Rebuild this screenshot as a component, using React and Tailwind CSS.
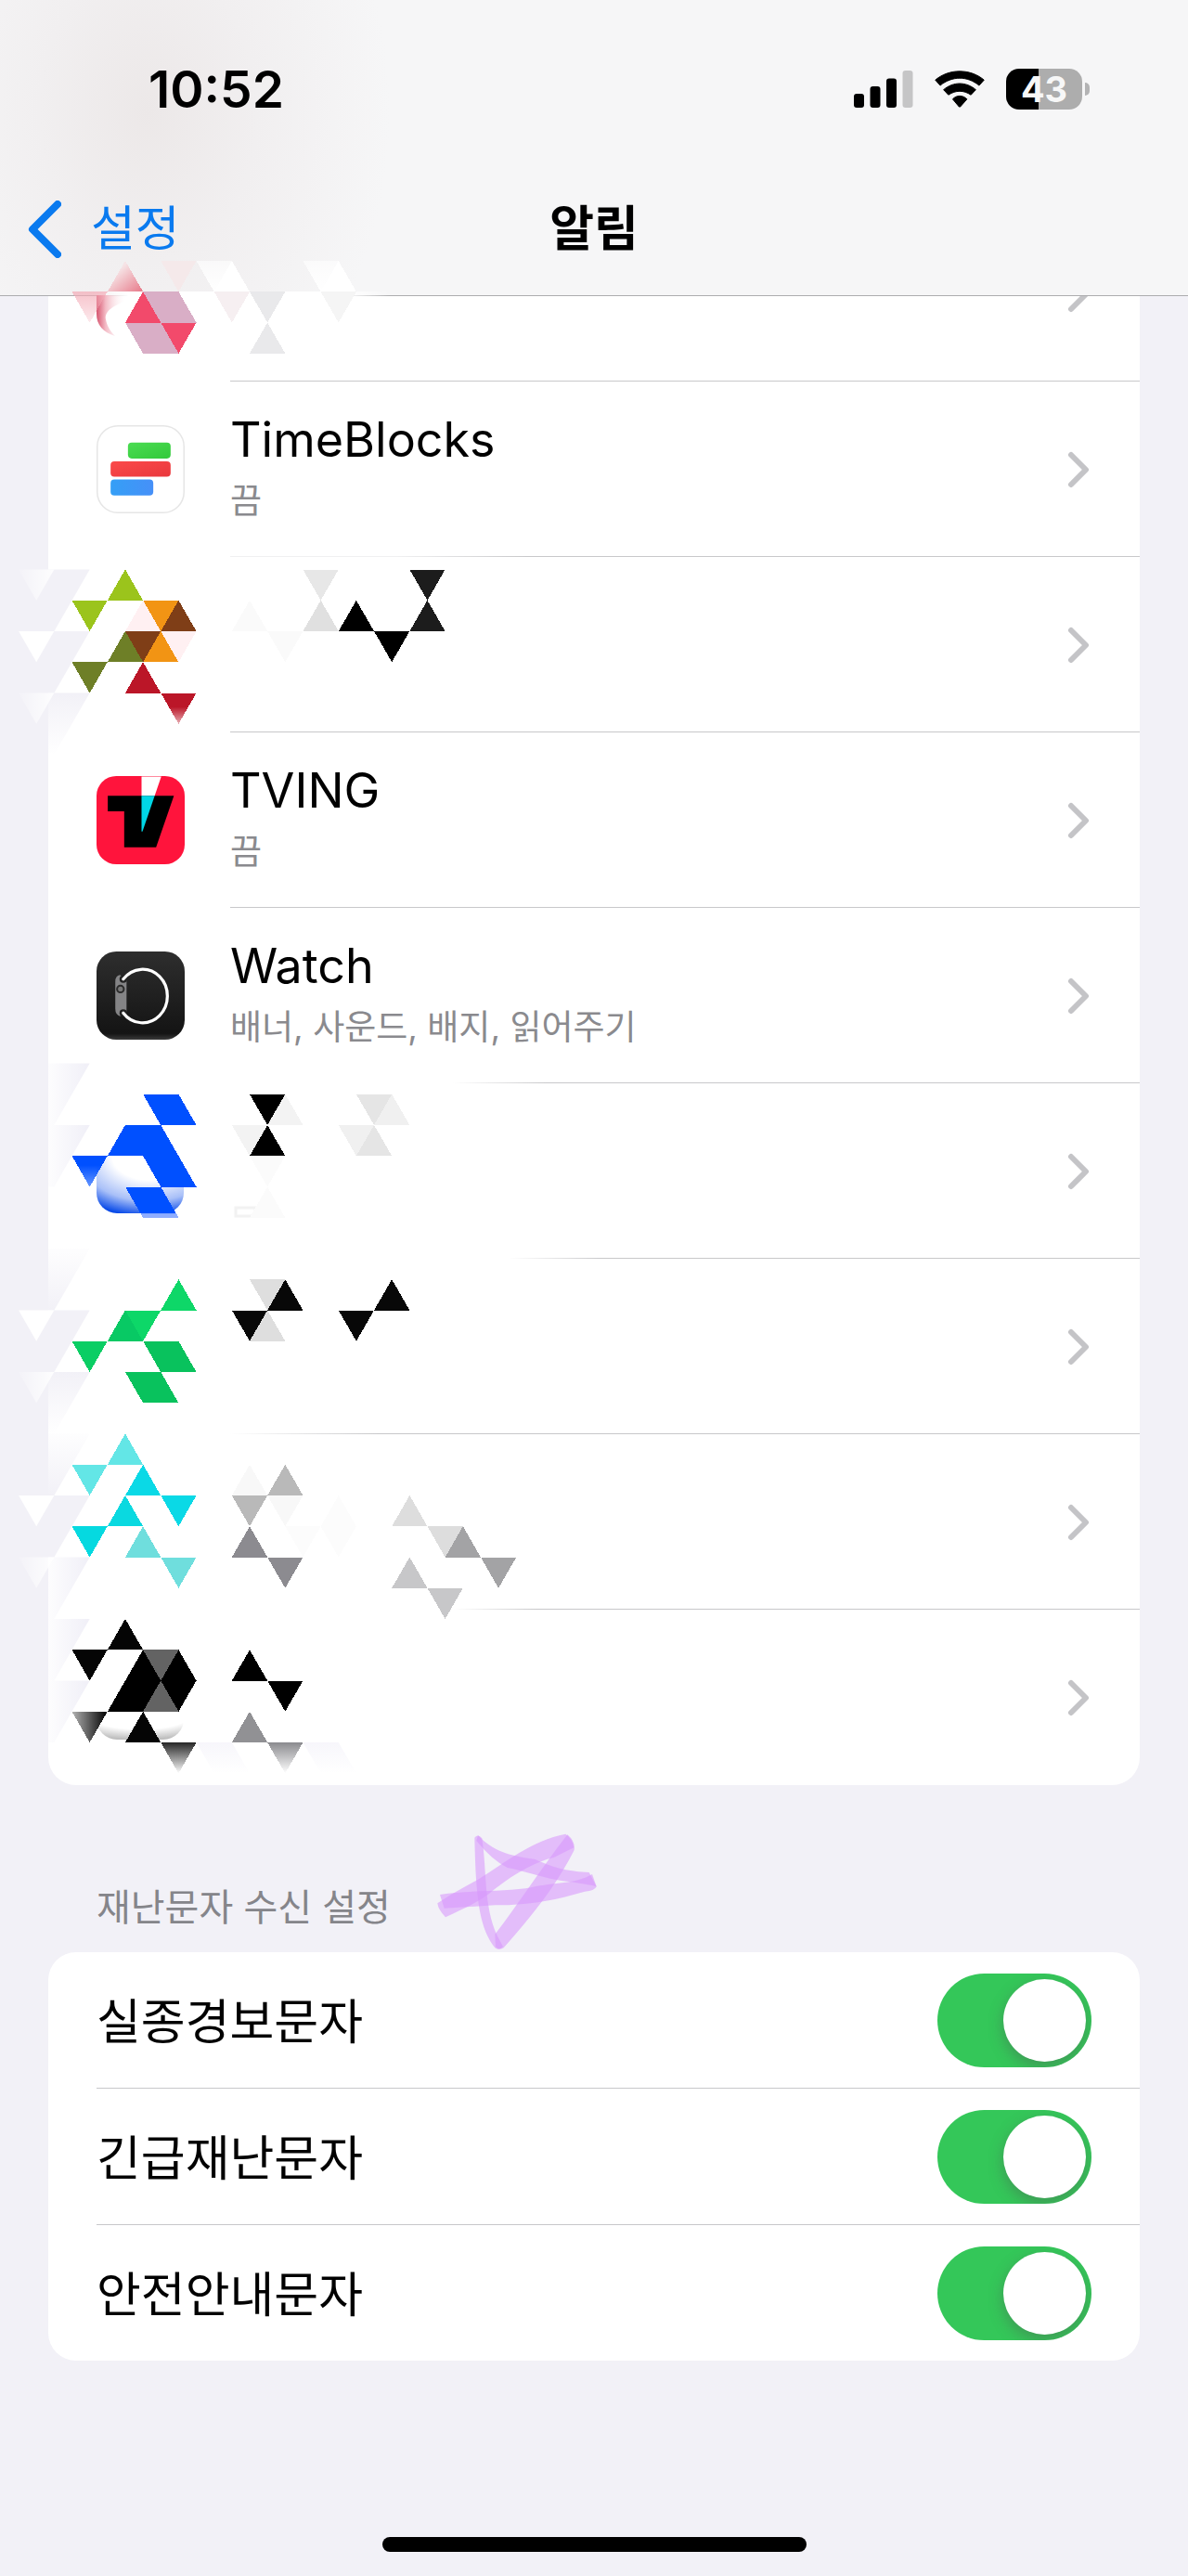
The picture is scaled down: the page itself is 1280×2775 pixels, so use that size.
import { useState } from 'react'

const SUB_OFF = '끔'

const APPS = [
  { id: 'a1', divider: 'bg-[#c8c8ca]' },
  { id: 'timeblocks', name: 'TimeBlocks', sub: SUB_OFF, Icon: TimeBlocksIcon, divider: 'bg-[linear-gradient(90deg,#f0f0f1_0px,#f0f0f1_180px,#c8c8ca_320px)]' },
  { id: 'a3', divider: 'bg-[#c8c8ca]' },
  { id: 'tving', name: 'TVING', sub: SUB_OFF, Icon: TvingIcon, divider: 'bg-[#c8c8ca]' },
  { id: 'watch', name: 'Watch', sub: '배너, 사운드, 배지, 읽어주기', Icon: WatchIcon, divider: 'bg-[linear-gradient(90deg,transparent_240px,#c8c8ca_340px)]' },
  { id: 'a6', divider: 'bg-[linear-gradient(90deg,transparent_300px,#c8c8ca_400px)]' },
  { id: 'a7', divider: 'bg-[linear-gradient(90deg,transparent_0px,#c8c8ca_160px)]' },
  { id: 'a8', divider: 'bg-[linear-gradient(90deg,transparent_240px,#c8c8ca_330px)]' },
  { id: 'a9' },
]

const ALERTS = [
  { id: 'missing', label: '실종경보문자' },
  { id: 'urgent', label: '긴급재난문자' },
  { id: 'safety', label: '안전안내문자' },
]

// Mosaic tiles: [column, row, direction, fill]
const TILES = [
  [0, 1, 'd', 'url(#pinkTip)'],
  [2, 0, 'u', 'url(#pinkFade)'], [5, 0, 'd', '#f5e9ea'],
  [7, 0, 'd', 'url(#whiteFade)'], [8, 0, 'u', '#ffffff'], [13, 0, 'd', 'url(#whiteFade)'], [14, 0, 'u', '#ffffff'],
  [3, 1, 'u', '#f24a6b'], [4, 1, 'd', '#d9aec6'], [5, 1, 'u', '#d9aec6'],
  [8, 1, 'd', '#f6eff1'], [10, 1, 'd', '#e9e9eb'], [14, 1, 'd', '#f5f5f5'],
  [3, 2, 'd', '#d9aec6'], [4, 2, 'u', '#d9aec6'], [5, 2, 'd', '#f24a6b'], [10, 2, 'u', '#e9e9eb'],

  [2, 10, 'u', '#9bc41c'], [13, 10, 'd', '#e7e7e7'], [19, 10, 'd', '#1c1c1c'],
  [0, 11, 'd', '#9bc41c'], [3, 11, 'u', '#fff0f2'], [4, 11, 'd', '#f29414'], [5, 11, 'u', '#7f3e17'],
  [9, 11, 'u', '#fafafa'], [13, 11, 'u', '#e0e0e0'], [15, 11, 'u', '#000000'], [19, 11, 'u', '#1c1c1c'],
  [2, 12, 'u', '#6e7f27'], [3, 12, 'd', '#7f3e17'], [4, 12, 'u', '#f29414'], [5, 12, 'd', '#fff0f2'],
  [11, 12, 'd', '#fafafa'], [17, 12, 'd', '#000000'],
  [0, 13, 'd', '#6e7f27'], [3, 13, 'u', '#bb1628'],
  [5, 14, 'd', 'url(#redFade)'],

  [4, 27, 'd', '#0050ff'], [5, 27, 'u', '#0050ff'], [10, 27, 'd', '#000000'], [11, 27, 'u', '#f3f3f3'],
  [16, 27, 'd', '#e5e5e5'], [17, 27, 'u', '#f0f0f0'],
  [2, 28, 'u', '#0050ff'], [3, 28, 'd', '#0050ff'], [4, 28, 'u', '#0050ff'],
  [9, 28, 'd', '#f3f3f3'], [10, 28, 'u', '#000000'], [15, 28, 'd', '#f0f0f0'], [16, 28, 'u', '#e5e5e5'],
  [0, 29, 'd', 'url(#blueFade)'], [4, 29, 'd', '#0050ff'], [5, 29, 'u', '#0050ff'], [10, 29, 'd', '#fbfbfb'],
  [3, 30, 'd', 'url(#blueFoot)'], [4, 30, 'u', 'url(#blueFoot)'], [10, 30, 'u', '#fbfbfb'],

  [5, 33, 'u', '#0ed768'], [10, 33, 'd', '#dedede'], [11, 33, 'u', '#080808'], [17, 33, 'u', '#080808'],
  [2, 34, 'u', '#08c964'], [3, 34, 'd', '#0dd768'], [9, 34, 'd', '#080808'], [10, 34, 'u', '#dedede'], [15, 34, 'd', '#080808'],
  [0, 35, 'd', '#0ace64'], [4, 35, 'd', '#09c25d'], [5, 35, 'u', '#09c25d'],
  [3, 36, 'd', '#09c25d'], [4, 36, 'u', '#09c25d'],

  [2, 38, 'u', '#63e6e6'],
  [0, 39, 'd', '#63e6e6'], [3, 39, 'u', '#0ad9e6'], [9, 39, 'u', '#f8f8f8'], [11, 39, 'u', '#b9b9b9'],
  [2, 40, 'u', '#0ad9e0'], [5, 40, 'd', '#0ad9e6'], [9, 40, 'd', '#b9b9b9'], [11, 40, 'd', '#f8f8f8'],
  [14, 40, 'u', '#fcfcfc'], [18, 40, 'u', '#dddddd'],
  [0, 41, 'd', '#05d9e0'], [3, 41, 'u', '#6fdedd'], [9, 41, 'u', '#8c8b90'], [12, 41, 'd', '#fcfcfc'],
  [14, 41, 'd', '#fcfcfc'], [20, 41, 'd', '#dddddd'], [21, 41, 'u', '#a3a3a5'],
  [5, 42, 'd', '#6fdedd'], [11, 42, 'd', '#8c8b90'], [18, 42, 'u', '#c7c7c9'], [23, 42, 'd', '#a3a3a5'],
  [20, 43, 'd', '#c7c7c9'],

  [2, 44, 'u', '#050505'],
  [0, 45, 'd', '#050505'], [3, 45, 'u', '#000000'], [4, 45, 'd', '#636363'], [5, 45, 'u', '#000000'], [9, 45, 'u', '#000000'],
  [2, 46, 'u', '#000000'], [3, 46, 'd', '#000000'], [4, 46, 'u', '#636363'], [5, 46, 'd', '#000000'], [11, 46, 'd', '#000000'],
  [0, 47, 'd', 'url(#inkSide)'], [3, 47, 'u', '#050505'], [9, 47, 'u', '#919194'],
  [5, 48, 'd', 'url(#inkFade)'], [11, 48, 'd', 'url(#grayFade)'],
]

// Background slivers along the left edge: [row, fill]
const WEDGES = [
  [10, '#f2f1f7'], [12, '#f2f1f7'], [14, 'url(#mistDown)'],
  [26, 'url(#mistSide)'], [28, 'url(#mistSide)'],
  [32, 'url(#mistUp)'], [34, '#f2f1f7'], [36, 'url(#mistDown)'],
  [38, 'url(#mistUp)'], [40, '#f2f1f7'], [42, 'url(#mistSide)'],
  [44, 'url(#mistSide)'], [46, 'url(#mistSide)'],
]

const GLINTS = [
  [10, 'url(#glint)'], [12, '#ffffff'], [14, 'url(#glint)'],
  [34, '#ffffff'], [36, 'url(#glint)'],
  [40, '#ffffff'], [42, 'url(#glint)'],
]

const px = (k) => 77.5 + 19.15 * k
const py = (r) => 281 + 33.25 * r

function tilePoints(k, r, dir) {
  return dir === 'u'
    ? `${px(k)},${py(r + 1)} ${px(k + 2)},${py(r + 1)} ${px(k + 1)},${py(r)}`
    : `${px(k)},${py(r)} ${px(k + 2)},${py(r)} ${px(k + 1)},${py(r + 1)}`
}

function Fade({ id, color, from = 1, to = 0, start = '0', dir = 'down' }) {
  const end = dir === 'side' ? { x2: 1, y2: 0 } : { x2: 0, y2: 1 }
  return (
    <linearGradient id={id} x1="0" y1="0" {...end}>
      <stop offset={start} stopColor={color} stopOpacity={from} />
      <stop offset="1" stopColor={color} stopOpacity={to} />
    </linearGradient>
  )
}

function Mosaic() {
  return (
    <svg className="pointer-events-none absolute top-0 left-0 z-20" width="640" height="1960" viewBox="0 0 640 1960" aria-hidden="true">
      <defs>
        <linearGradient id="pinkFade" x1="0" y1="0" x2="1" y2="1">
          <stop offset="0.3" stopColor="#f6e4e6" />
          <stop offset="0.95" stopColor="#e8808f" />
        </linearGradient>
        <Fade id="pinkTip" color="#f3a9b5" from={0.7} to={0.25} />
        <Fade id="whiteFade" color="#ffffff" from={0.6} to={1} />
        <Fade id="redFade" color="#bb1628" start="0.45" to={0.35} />
        <Fade id="blueFade" color="#0050ff" start="0.3" to={0.6} />
        <Fade id="glint" color="#ffffff" dir="side" from={0.1} to={0.9} />
        <Fade id="mistDown" color="#f2f1f7" />
        <Fade id="mistUp" color="#f2f1f7" from={0.1} to={1} />
        <Fade id="mistSide" color="#ecebf5" dir="side" from={0.1} to={0.8} />
        <Fade id="inkSide" color="#000000" dir="side" from={0.3} to={1} />
        <Fade id="inkFade" color="#000000" from={0.85} to={0} />
        <Fade id="grayFade" color="#8a8a8e" from={1} to={0} />
        <Fade id="rowMist" color="#f5f4fa" from={0.8} to={0} />
        <linearGradient id="blueFoot" gradientUnits="userSpaceOnUse" x1="0" y1="1278" x2="0" y2="1312">
          <stop offset="0.85" stopColor="#0050ff" />
          <stop offset="0.87" stopColor="#8fadff" />
        </linearGradient>
        <linearGradient id="edge" x1="0" y1="0" x2="1" y2="0">
          <stop offset="0" stopColor="#fff" stopOpacity="0" />
          <stop offset="0.12" stopColor="#fff" />
          <stop offset="0.85" stopColor="#fff" />
          <stop offset="1" stopColor="#fff" stopOpacity="0" />
        </linearGradient>
        <linearGradient id="pinkIcon" x1="0" y1="0" x2="1" y2="0">
          <stop offset="0" stopColor="#d6556f" />
          <stop offset="0.3" stopColor="#f3b9c4" />
          <stop offset="1" stopColor="#fff" stopOpacity="0" />
        </linearGradient>
        <radialGradient id="blueIcon" cx="0.6" cy="0" r="1.05">
          <stop offset="0.4" stopColor="#fff" />
          <stop offset="0.75" stopColor="#a9c0f8" />
          <stop offset="1" stopColor="#0a4be8" />
        </radialGradient>
        <radialGradient id="inkIcon" cx="0.5" cy="0" r="1">
          <stop offset="0.6" stopColor="#fff" />
          <stop offset="1" stopColor="#bdbdbd" />
        </radialGradient>
      </defs>

      <rect x="100" y="314" width="320" height="6" fill="url(#edge)" />
      <path d="M104 318h32v6c-10 4-24 10-22 20 1 6 4 12 10 18-13-4-20-12-20-24z" fill="url(#pinkIcon)" />

      {WEDGES.map(([r, fill]) => (
        <polygon
          key={r}
          points={`52,${py(r)} ${px(1)},${py(r)} ${px(-1)},${py(r + 2)} 52,${py(r + 2)}`}
          fill={fill}
        />
      ))}
      {GLINTS.map(([r, fill]) => (
        <polygon key={r} points={tilePoints(-3, r, 'd')} fill={fill} />
      ))}

      <path d="M104 1252 L116 1245H198V1285a22 22 0 0 1-22 22H126a22 22 0 0 1-22-22z" fill="url(#blueIcon)" />
      <path d="M104 1846H198V1852a22 22 0 0 1-22 22H126a22 22 0 0 1-22-22z" fill="url(#inkIcon)" />
      <rect x="254" y="1301" width="21" height="9" fill="none" stroke="#f2f2f2" strokeWidth="3" />
      {[7, 13].map((k) => (
        <polygon
          key={k}
          points={`${px(k)},${py(48)} ${px(k + 2)},${py(48)} ${px(k + 3)},${py(49)} ${px(k + 1)},${py(49)}`}
          fill="url(#rowMist)"
        />
      ))}

      {TILES.map(([k, r, dir, fill]) => (
        <polygon key={`${k}-${r}`} points={tilePoints(k, r, dir)} fill={fill} shapeRendering="crispEdges" />
      ))}
    </svg>
  )
}

function TimeBlocksIcon() {
  return (
    <svg className="size-[95px]" viewBox="0 0 94 94" aria-hidden="true">
      <defs>
        <linearGradient id="tbGreen" x1="0" y1="0" x2="1" y2="1">
          <stop offset="0" stopColor="#4bdc52" />
          <stop offset="1" stopColor="#33c93b" />
        </linearGradient>
        <linearGradient id="tbRed" x1="0" y1="0" x2="1" y2="1">
          <stop offset="0" stopColor="#fb4a4a" />
          <stop offset="1" stopColor="#e9383d" />
        </linearGradient>
        <linearGradient id="tbBlue" x1="0" y1="0" x2="1" y2="0">
          <stop offset="0" stopColor="#359ff6" />
          <stop offset="1" stopColor="#4690f8" />
        </linearGradient>
      </defs>
      <rect x="0.75" y="0.75" width="92.5" height="92.5" rx="22" fill="#fff" stroke="#e6e6e6" strokeWidth="1.5" />
      <rect x="33.5" y="18.5" width="45.5" height="17" rx="4" fill="url(#tbGreen)" />
      <rect x="15" y="38.5" width="64" height="16.5" rx="4" fill="url(#tbRed)" />
      <rect x="15" y="58" width="45.5" height="17" rx="4" fill="url(#tbBlue)" />
    </svg>
  )
}

function TvingIcon() {
  return (
    <svg className="size-[95px]" viewBox="0 0 94 94" aria-hidden="true">
      <rect width="94" height="94" rx="21" fill="#ff143c" />
      <path d="M12 21H82.5L63.5 76H29.5V37.5H12z" fill="#000" />
      <path d="M48 0.5H69L62 21H48z" fill="#fff" />
      <path d="M48 21H62L49 59H48z" fill="#00d7e6" />
    </svg>
  )
}

function WatchIcon() {
  return (
    <svg className="size-[95px]" viewBox="0 0 94 94" aria-hidden="true">
      <defs>
        <linearGradient id="watchBg" x1="0" y1="0" x2="0" y2="1">
          <stop offset="0" stopColor="#2e2e2e" />
          <stop offset="0.93" stopColor="#141414" />
          <stop offset="1" stopColor="#3a3a3a" />
        </linearGradient>
      </defs>
      <rect width="94" height="94" rx="21" fill="url(#watchBg)" />
      <path d="M20 32q0-6 5-7l7 5v34l-7 5q-5-2-5-8z" fill="#848486" />
      <circle cx="28.5" cy="29.5" r="4" fill="#222" />
      <circle cx="28.5" cy="65.5" r="4" fill="#222" />
      <path d="M28.5 29.5A26.5 28.5 0 1 1 28.5 65.5" fill="none" stroke="#fff" strokeWidth="3.2" strokeLinecap="round" />
      <circle cx="25.5" cy="40" r="3.6" fill="#777" stroke="#2b2b2b" strokeWidth="2" />
    </svg>
  )
}

function SignalIcon() {
  return (
    <svg width="64" height="40" viewBox="0 0 64 40" aria-hidden="true">
      <rect x="0" y="25" width="11" height="15" rx="3" />
      <rect x="17.5" y="17" width="11" height="23" rx="3" />
      <rect x="35" y="8.5" width="11" height="31.5" rx="3" />
      <rect x="52.5" y="0" width="11" height="40" rx="3" fill="#c5c5c6" />
    </svg>
  )
}

function WifiIcon() {
  return (
    <svg width="56" height="40" viewBox="375 74 168 122" aria-hidden="true">
      <g stroke="#000" strokeWidth="3" strokeLinejoin="round">
        <path d="M379 105C424 67 494 67 539 105L523 123C484 91 434 91 395 123Z" />
        <path d="M406 137C438 110 480 110 512 137L496 154C472 138 446 138 422 154Z" />
        <path d="M436 168C448 154 470 154 483 168L461 193Q459 194 457 193Z" />
      </g>
    </svg>
  )
}

function Battery() {
  return (
    <div className="flex items-center gap-[3px]">
      <div className="flex h-11 w-[82px] items-center justify-center rounded-[14px] bg-[linear-gradient(90deg,#000_43%,#adadad_43%)] text-[38px] leading-none font-bold text-[#f7f7f7]">
        43
      </div>
      <div className="h-[14px] w-[5px] rounded-r-full bg-[#b3b3b4]" />
    </div>
  )
}

function Header() {
  return (
    <header className="relative z-10 h-[319px] border-b border-[#acacae] bg-[#f6f6f7] bg-[radial-gradient(ellipse_260px_360px_at_160px_120px,#ece8e8_0%,#f1eff0_45%,#f6f6f700_100%)]">
      <div className="flex h-[192px] items-center justify-between pr-[106px] pl-[160px]">
        <time className="text-[55px] leading-none font-semibold">10:52</time>
        <div className="flex items-center gap-[22px]">
          <SignalIcon />
          <WifiIcon />
          <Battery />
        </div>
      </div>
      <nav className="grid grid-cols-3 items-center px-[30px] text-[52px] leading-[110px]">
        <a href="#settings" className="flex items-center gap-8 text-[#0a7aef]">
          <svg width="36" height="62" viewBox="0 0 36 62" fill="none" aria-hidden="true">
            <path d="M32 4L5 31L32 58" stroke="currentColor" strokeWidth="8" strokeLinecap="round" strokeLinejoin="round" />
          </svg>
          설정
        </a>
        <h1 className="text-center font-bold">알림</h1>
      </nav>
    </header>
  )
}

function Chevron() {
  return (
    <svg className="ml-auto shrink-0" width="26" height="40" viewBox="0 0 26 40" fill="none" aria-hidden="true">
      <path d="M4 4L20 20L4 36" stroke="#c4c4c7" strokeWidth="6" strokeLinecap="round" strokeLinejoin="round" />
    </svg>
  )
}

function AppRow({ app }) {
  const { name, sub, Icon, divider } = app
  return (
    <li className="relative">
      <a href={`#${app.id}`} className="flex h-[189px] items-center px-[52px]">
        {Icon && <Icon />}
        {name && (
          <div className="ml-[49px]">
            <p className="text-[52px] leading-[64px]">{name}</p>
            <p className="mt-1 text-[37px] leading-[60px] text-[#8a8a8e]">{sub}</p>
          </div>
        )}
        <Chevron />
      </a>
      {divider && <div className={`absolute right-0 bottom-0 left-[196px] h-px ${divider}`} />}
    </li>
  )
}

function ToggleRow({ alert, checked, onChange }) {
  return (
    <li className="ml-[52px] flex h-[147px] items-center justify-between border-b border-[#c8c8ca] pr-[52px] last:h-[146px] last:border-b-0">
      <label htmlFor={alert.id} className="pt-1.5 text-[52px] leading-none">
        {alert.label}
      </label>
      <input
        id={alert.id}
        type="checkbox"
        role="switch"
        checked={checked}
        onChange={onChange}
        className="relative h-[101px] w-[166px] cursor-pointer appearance-none overflow-hidden rounded-full bg-[#e9e9eb] before:absolute before:top-[6px] before:left-[6px] before:size-[89px] before:rounded-full before:bg-white before:shadow-[0_6px_16px_rgba(80,80,80,0.4)] checked:bg-[#34c759] checked:before:left-[71px]"
      />
    </li>
  )
}

function HighlighterStar() {
  return (
    <svg className="absolute top-[52px] left-[470px]" width="174" height="127" viewBox="210 104 522 381" aria-hidden="true">
      <g fill="#d898fb" fillOpacity="0.58" strokeLinejoin="round">
        <path d="M334 118Q345 104 358 120C374 220 362 340 408 436L426 470Q412 484 400 474C350 410 338 320 334 118Z" />
        <path d="M400 430C470 340 540 230 634 108Q660 130 656 158C600 270 520 370 428 474Q412 484 402 470Z" />
        <path d="M628 106C520 126 430 200 350 250C300 278 250 305 214 330Q216 350 240 375C290 350 340 330 380 300C450 240 530 195 590 182L655 150Q650 120 628 106Z" />
        <path d="M222 302C320 286 440 294 520 278C590 262 660 268 714 236L728 276Q722 290 690 292C600 318 520 336 400 336L236 346Z" />
        <path d="M345 110C390 160 450 178 530 188C600 220 640 226 704 230L728 276Q700 268 620 258C560 250 500 226 440 215Q390 190 340 128Z" />
      </g>
    </svg>
  )
}

export default function App() {
  const [enabled, setEnabled] = useState({ missing: true, urgent: true, safety: true })

  const toggle = (id) => setEnabled((prev) => ({ ...prev, [id]: !prev[id] }))

  return (
    <div className="relative flex min-h-screen flex-col overflow-hidden bg-[#f2f1f7] font-['Inter','Noto_Sans_CJK_KR',sans-serif] text-black">
      <Header />

      <main className="px-[52px]">
        {/* first row is scrolled under the header */}
        <ul className="-mt-[97px] overflow-hidden rounded-[30px] bg-white">
          {APPS.map((app) => (
            <AppRow key={app.id} app={app} />
          ))}
        </ul>

        <section className="relative">
          <h2 className="px-[52px] pt-[100px] pb-[16px] text-[40px] leading-[64px] text-[#85858a]">재난문자 수신 설정</h2>
          <ul className="overflow-hidden rounded-[30px] bg-white">
            {ALERTS.map((alert) => (
              <ToggleRow key={alert.id} alert={alert} checked={enabled[alert.id]} onChange={() => toggle(alert.id)} />
            ))}
          </ul>
          <div className="pointer-events-none absolute top-0 -left-[52px]">
            <HighlighterStar />
          </div>
        </section>
      </main>

      <div className="mt-auto mb-[26px] h-4 w-[457px] self-center rounded-full bg-black" />
      <Mosaic />
    </div>
  )
}
